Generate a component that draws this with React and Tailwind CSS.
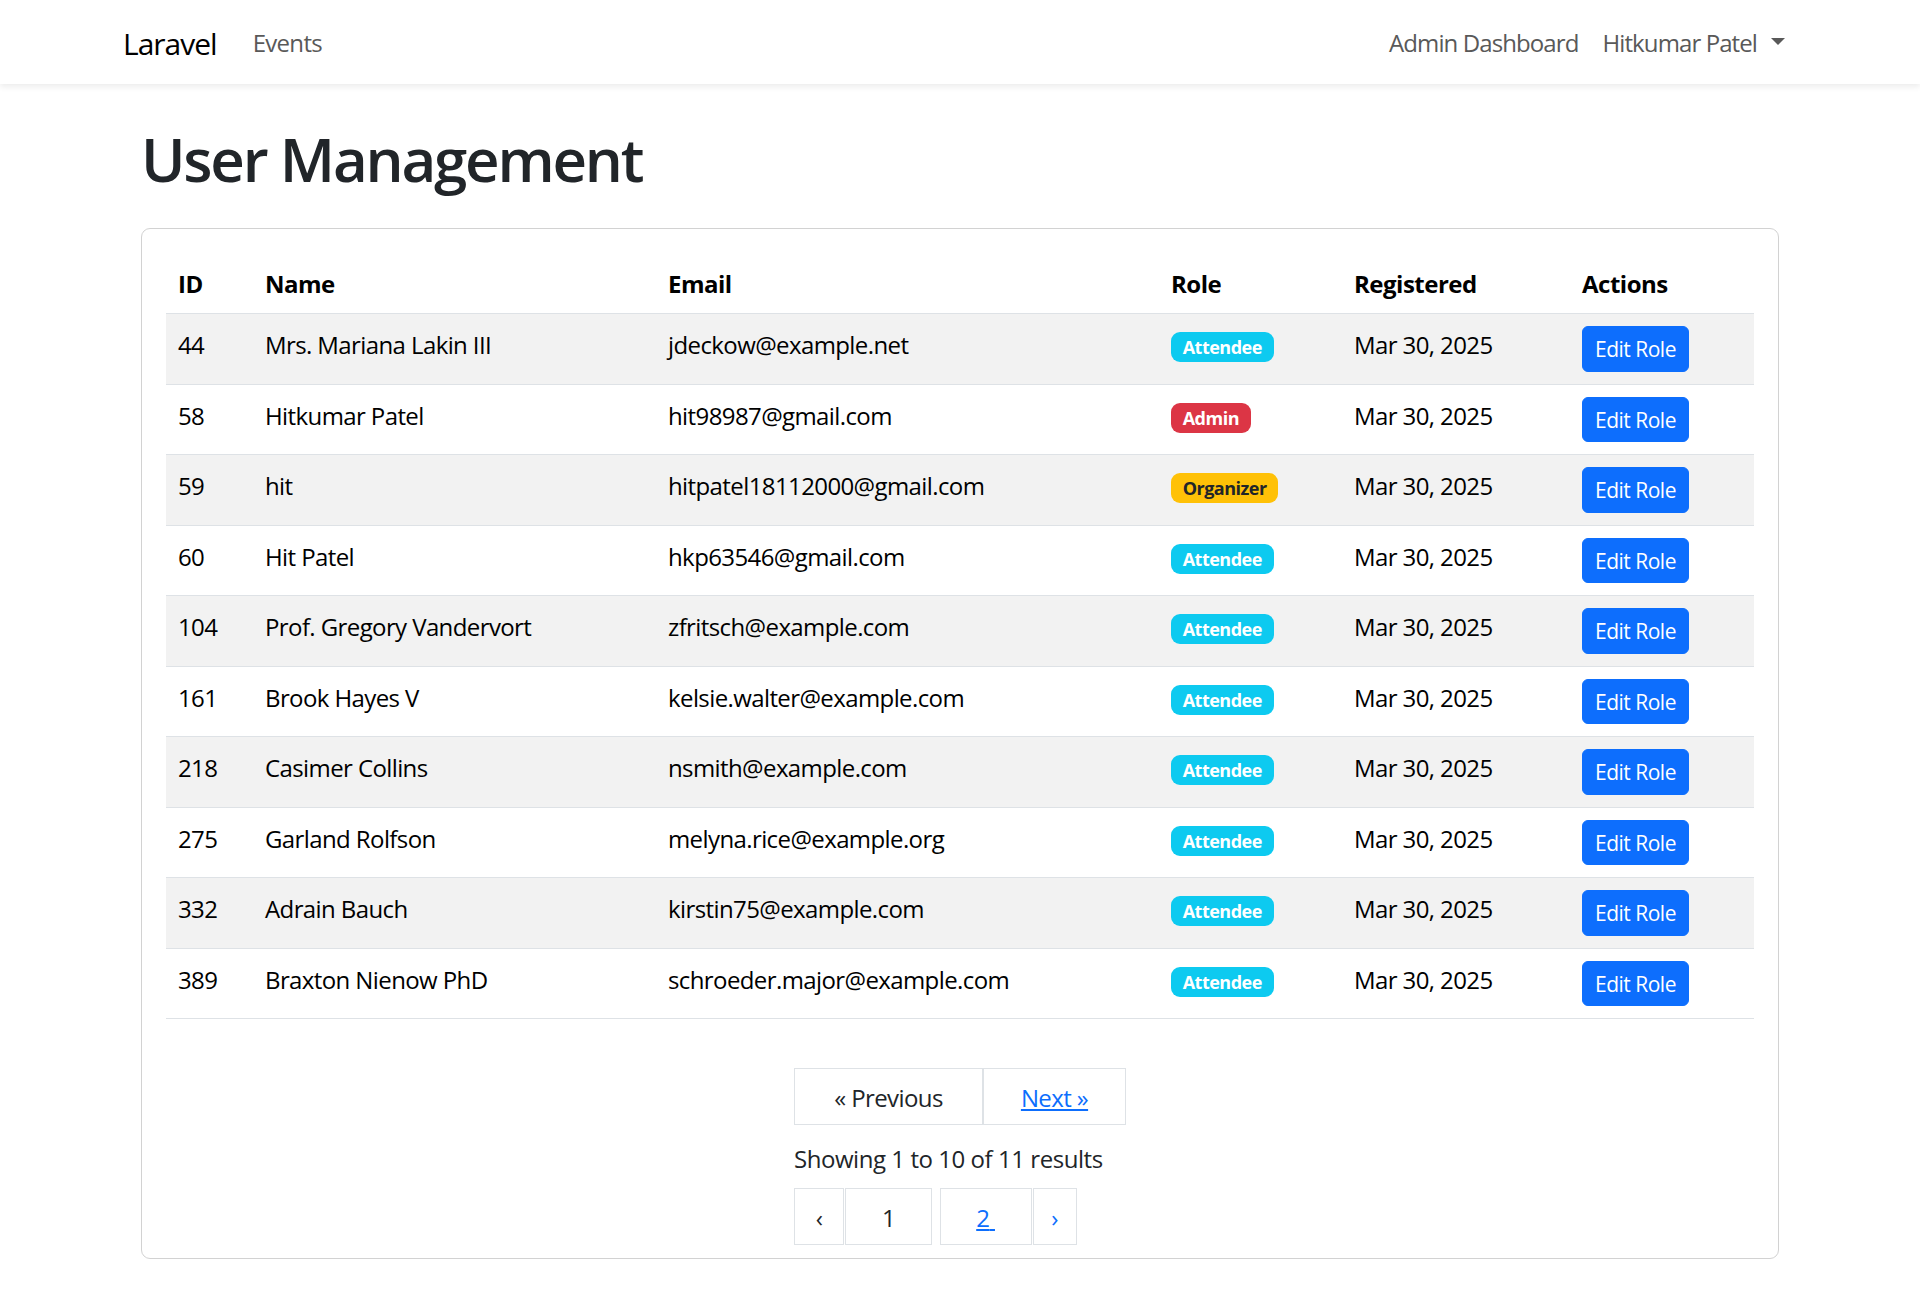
import React from "react";

const users = [
  { id: 44, name: "Mrs. Mariana Lakin III", email: "jdeckow@example.net", role: "Attendee" },
  { id: 58, name: "Hitkumar Patel", email: "hit98987@gmail.com", role: "Admin" },
  { id: 59, name: "hit", email: "hitpatel18112000@gmail.com", role: "Organizer" },
  { id: 60, name: "Hit Patel", email: "hkp63546@gmail.com", role: "Attendee" },
  { id: 104, name: "Prof. Gregory Vandervort", email: "zfritsch@example.com", role: "Attendee" },
  { id: 161, name: "Brook Hayes V", email: "kelsie.walter@example.com", role: "Attendee" },
  { id: 218, name: "Casimer Collins", email: "nsmith@example.com", role: "Attendee" },
  { id: 275, name: "Garland Rolfson", email: "melyna.rice@example.org", role: "Attendee" },
  { id: 332, name: "Adrain Bauch", email: "kirstin75@example.com", role: "Attendee" },
  { id: 389, name: "Braxton Nienow PhD", email: "schroeder.major@example.com", role: "Attendee" },
];

function RoleBadge({ role }) {
  if (role === "Admin") {
    return (
      <span className="inline-block align-top mt-[6px] rounded-[9px] bg-[#dc3545] px-[11.7px] py-[6px] text-[18px] font-bold leading-[18px] tracking-[-0.5px] text-white">
        Admin
      </span>
    );
  }
  if (role === "Organizer") {
    return (
      <span className="inline-block align-top mt-[6px] rounded-[9px] bg-[#ffc107] px-[11.7px] py-[6px] text-[18px] font-bold leading-[18px] tracking-[-0.5px] text-[#212529]">
        Organizer
      </span>
    );
  }
  return (
    <span className="inline-block align-top mt-[6px] rounded-[9px] bg-[#0dcaf0] px-[11.7px] py-[6px] text-[18px] font-bold leading-[18px] tracking-[-0.5px] text-white">
      Attendee
    </span>
  );
}

const th = "border-b border-[#dee2e6] px-[12px] pt-[13px] pb-[11px] text-left align-top font-bold tracking-[-0.5px]";
const tdText = "border-b border-[#dee2e6] px-[12px] pt-[13px] pb-[11px] align-top whitespace-nowrap";
const tdBox = "border-b border-[#dee2e6] px-[12px] py-[12px] align-top";

export default function App() {
  return (
    <div className="min-h-[1296px] bg-white font-['Open_Sans','Noto_Sans',sans-serif] text-[24px] leading-[36px] tracking-[-0.6px] text-[#212529]">
      {/* Navbar */}
      <nav className="relative z-10 h-[84px] bg-white shadow-[0_3px_6px_rgba(0,0,0,0.075)]">
        <div className="mx-auto flex h-full w-[1674px] items-center pt-[2px]">
          <a className="mr-[24px] text-[30px] leading-[45px] tracking-[-1px] text-black">Laravel</a>
          <a className="px-[12px] text-[24px] leading-[36px] tracking-[-0.7px] text-[#595959]">Events</a>
          <div className="ml-auto flex items-center tracking-[-0.9px]">
            <a className="px-[12px] text-[#595959]">Admin Dashboard</a>
            <a className="flex items-center px-[12px] text-[#595959]">
              Hitkumar Patel
              <span className="ml-[14px] mt-[-3px] inline-block h-0 w-0 border-x-[7px] border-t-[7px] border-x-transparent border-t-[#595959]"></span>
            </a>
          </div>
        </div>
      </nav>

      {/* Main */}
      <main className="mx-auto w-[1638px] pt-[36px]">
        <h1 className="mb-[36px] pt-[3px] h-[72px] text-[60px] font-semibold leading-[72px] tracking-[-2.2px] text-[#212529]">
          User Management
        </h1>

        <div className="rounded-[9px] border border-[#d2d2d2] px-[24px] pt-[24px] pb-[13px]">
          <table className="w-[1588px] table-fixed border-collapse text-black">
            <colgroup>
              <col className="w-[87px]" />
              <col className="w-[403px]" />
              <col className="w-[503px]" />
              <col className="w-[183px]" />
              <col className="w-[228px]" />
              <col className="w-[184px]" />
            </colgroup>
            <thead>
              <tr>
                <th className={th}>ID</th>
                <th className={th}>Name</th>
                <th className={th}>Email</th>
                <th className={th}>Role</th>
                <th className={th}>Registered</th>
                <th className={th}>Actions</th>
              </tr>
            </thead>
            <tbody>
              {users.map((u, i) => {
                const bg = i % 2 === 0 ? "bg-[#f2f2f2]" : "bg-white";
                return (
                  <tr key={u.id} className={bg}>
                    <td className={tdText}>{u.id}</td>
                    <td className={tdText}>{u.name}</td>
                    <td className={tdText}>{u.email}</td>
                    <td className={tdBox}>
                      <RoleBadge role={u.role} />
                    </td>
                    <td className={tdText}>Mar 30, 2025</td>
                    <td className={tdBox}>
                      <button className="inline-block rounded-[6px] border border-[#0d6efd] bg-[#0d6efd] px-[12px] pt-[7px] pb-[5px] text-[21px] leading-[31.5px] tracking-[-0.5px] text-white">
                        Edit Role
                      </button>
                    </td>
                  </tr>
                );
              })}
            </tbody>
          </table>

          {/* Pagination */}
          <div className="flex justify-center pt-[49px]">
            <div className="flex flex-col items-start">
              <div className="flex">
                <span className="w-[189px] border border-[#dee2e6] pt-[10.5px] pb-[8.5px] text-center leading-[36px] text-[#212529]">
                  « Previous
                </span>
                <a className="w-[143px] border border-[#dee2e6] pt-[10.5px] pb-[8.5px] text-center leading-[36px] text-[#0d6efd] underline">
                  Next »
                </a>
              </div>
              <div className="mt-[16px] mb-[-1px] leading-[36px] tracking-[-0.45px] text-[#212529]">Showing 1 to 10 of 11 results</div>
              <div className="mt-[12px] flex">
                <span className="w-[50px] border border-[#dee2e6] pt-[10.5px] pb-[8.5px] text-center leading-[36px] text-[#212529]">‹</span>
                <span className="ml-[1px] w-[87px] border border-[#dee2e6] pt-[10.5px] pb-[8.5px] text-center leading-[36px] text-[#212529]">1</span>
                <a className="ml-[7.6px] w-[92px] border border-[#dee2e6] pt-[10.5px] pb-[8.5px] text-center leading-[36px] text-[#0d6efd] underline">
                  2{"\u00a0"}
                </a>
                <a className="ml-[1px] w-[44px] border border-[#dee2e6] pt-[10.5px] pb-[8.5px] text-center leading-[36px] text-[#0d6efd]">›</a>
              </div>
            </div>
          </div>
        </div>
      </main>
    </div>
  );
}
